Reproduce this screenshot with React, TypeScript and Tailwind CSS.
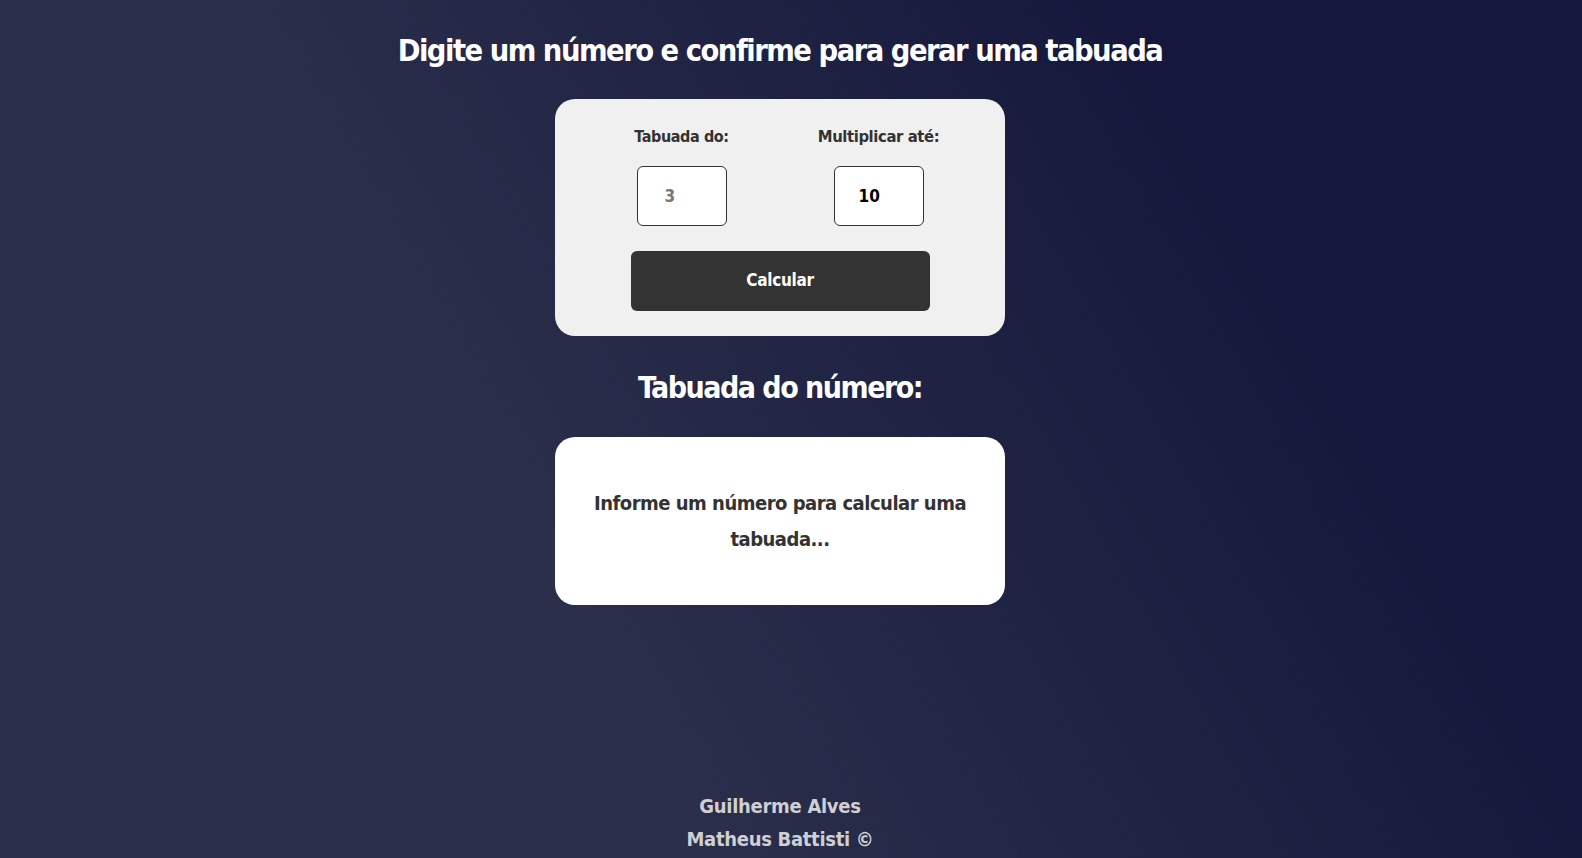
import React from "react";

const font = { fontFamily: '"DejaVu Sans Condensed", "DejaVu Sans", sans-serif' };

export default function App() {
  return (
    <div
      className="min-h-[858px] w-full flex flex-col items-center pr-[22px] bg-[linear-gradient(60deg,#2b2f4b_34%,#15183c_78%)] text-white [font-stretch:condensed]"
      style={font}
    >
      <h1 className="mt-[28px] text-[30.5px] leading-[46px] font-bold tracking-[-1.5px]">
        Digite um número e confirme para gerar uma tabuada
      </h1>

      <div className="mt-[25px] w-[450px] h-[237px] rounded-[20px] bg-[#f0f0f0] flex flex-col items-center pt-[26px]">
        <div className="flex gap-[107px]">
          <div className="flex flex-col items-center w-[90px]">
            <label className="text-[16px] leading-[24px] font-bold text-[#333] whitespace-nowrap tracking-[-0.4px]">Tabuada do:</label>
            <input
              className="mt-[17px] w-[90px] h-[60px] rounded-[6px] border border-[#333] bg-white text-left pl-[27px] text-[17px] font-bold text-black placeholder:text-[#777] outline-none [font-stretch:condensed]"
              style={font}
              placeholder="3"
            />
          </div>
          <div className="flex flex-col items-center w-[90px]">
            <label className="text-[16.5px] leading-[24px] font-bold text-[#333] whitespace-nowrap tracking-[-0.4px]">Multiplicar até:</label>
            <input
              className="mt-[17px] w-[90px] h-[60px] rounded-[6px] border border-[#333] bg-white text-left pl-[24px] text-[17px] font-bold text-black outline-none [font-stretch:condensed]"
              style={font}
              defaultValue="10"
            />
          </div>
        </div>
        <button
          className="mt-[25px] w-[299px] h-[60px] rounded-[6px] bg-[#333] text-white text-[17px] font-bold tracking-[-0.3px] [font-stretch:condensed]"
          style={font}
        >
          Calcular
        </button>
      </div>

      <h2 className="mt-[27px] text-[30px] leading-[50px] font-bold tracking-[-1.5px]">Tabuada do número:</h2>

      <div className="mt-[24px] w-[450px] h-[168px] rounded-[20px] bg-white flex items-center justify-center px-[20px]">
        <p className="text-center text-[20px] leading-[36px] font-bold text-[#333] tracking-[-0.5px]">
          Informe um número para calcular uma tabuada...
        </p>
      </div>

      <footer className="mt-auto pb-[2px] flex flex-col items-center text-[#cfcfd4] text-[20px] leading-[33px] font-bold tracking-[-0.3px]">
        <span>Guilherme Alves</span>
        <span>Matheus Battisti ©</span>
      </footer>
    </div>
  );
}
